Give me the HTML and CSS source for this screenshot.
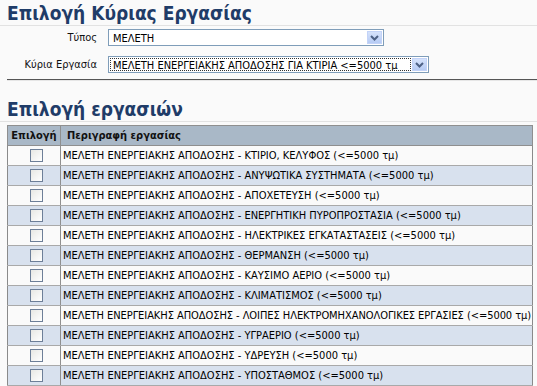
FILE: index.html
```html
<!DOCTYPE html>
<html>
<head>
<meta charset="utf-8">
<link rel="stylesheet" href="styles.css">
</head>
<body>
<h2 class="title">Επιλογή Κύριας Εργασίας</h2>
<div class="form">
  <div class="frow">
    <span class="lbl">Τύπος</span>
    <div class="sel sel-type"><span class="val">ΜΕΛΕΤΗ</span><span class="btn"><svg width="9" height="6" viewBox="0 0 9 6"><path d="M1 1 L4.5 4.5 L8 1" fill="none" stroke="#4d6185" stroke-width="2"/></svg></span></div>
  </div>
  <div class="frow last">
    <span class="lbl">Κύρια Εργασία</span>
    <div class="sel sel-main"><span class="val focus">ΜΕΛΕΤΗ ΕΝΕΡΓΕΙΑΚΗΣ ΑΠΟΔΟΣΗΣ ΓΙΑ ΚΤΙΡΙΑ &lt;=5000 τμ</span><span class="btn"><svg width="9" height="6" viewBox="0 0 9 6"><path d="M1 1 L4.5 4.5 L8 1" fill="none" stroke="#4d6185" stroke-width="2"/></svg></span></div>
  </div>
</div>
<div class="sep"></div>
<h2 class="title title2">Επιλογή εργασιών</h2>
<table class="tasks">
  <colgroup><col class="col1"><col></colgroup>
  <thead>
    <tr><th class="c1">Επιλογή</th><th class="c2">Περιγραφή εργασίας</th></tr>
  </thead>
  <tbody>
    <tr><td class="c1"><span class="cb"></span></td><td>ΜΕΛΕΤΗ ΕΝΕΡΓΕΙΑΚΗΣ ΑΠΟΔΟΣΗΣ - ΚΤΙΡΙΟ, ΚΕΛΥΦΟΣ (&lt;=5000 τμ)</td></tr>
    <tr class="alt"><td class="c1"><span class="cb"></span></td><td>ΜΕΛΕΤΗ ΕΝΕΡΓΕΙΑΚΗΣ ΑΠΟΔΟΣΗΣ - ΑΝΥΨΩΤΙΚΑ ΣΥΣΤΗΜΑΤΑ (&lt;=5000 τμ)</td></tr>
    <tr><td class="c1"><span class="cb"></span></td><td>ΜΕΛΕΤΗ ΕΝΕΡΓΕΙΑΚΗΣ ΑΠΟΔΟΣΗΣ - ΑΠΟΧΕΤΕΥΣΗ (&lt;=5000 τμ)</td></tr>
    <tr class="alt"><td class="c1"><span class="cb"></span></td><td>ΜΕΛΕΤΗ ΕΝΕΡΓΕΙΑΚΗΣ ΑΠΟΔΟΣΗΣ - ΕΝΕΡΓΗΤΙΚΗ ΠΥΡΟΠΡΟΣΤΑΣΙΑ (&lt;=5000 τμ)</td></tr>
    <tr><td class="c1"><span class="cb"></span></td><td>ΜΕΛΕΤΗ ΕΝΕΡΓΕΙΑΚΗΣ ΑΠΟΔΟΣΗΣ - ΗΛΕΚΤΡΙΚΕΣ ΕΓΚΑΤΑΣΤΑΣΕΙΣ (&lt;=5000 τμ)</td></tr>
    <tr class="alt"><td class="c1"><span class="cb"></span></td><td>ΜΕΛΕΤΗ ΕΝΕΡΓΕΙΑΚΗΣ ΑΠΟΔΟΣΗΣ - ΘΕΡΜΑΝΣΗ (&lt;=5000 τμ)</td></tr>
    <tr><td class="c1"><span class="cb"></span></td><td>ΜΕΛΕΤΗ ΕΝΕΡΓΕΙΑΚΗΣ ΑΠΟΔΟΣΗΣ - ΚΑΥΣΙΜΟ ΑΕΡΙΟ (&lt;=5000 τμ)</td></tr>
    <tr class="alt"><td class="c1"><span class="cb"></span></td><td>ΜΕΛΕΤΗ ΕΝΕΡΓΕΙΑΚΗΣ ΑΠΟΔΟΣΗΣ - ΚΛΙΜΑΤΙΣΜΟΣ (&lt;=5000 τμ)</td></tr>
    <tr><td class="c1"><span class="cb"></span></td><td class="long">ΜΕΛΕΤΗ ΕΝΕΡΓΕΙΑΚΗΣ ΑΠΟΔΟΣΗΣ - ΛΟΙΠΕΣ ΗΛΕΚΤΡΟΜΗΧΑΝΟΛΟΓΙΚΕΣ ΕΡΓΑΣΙΕΣ (&lt;=5000 τμ)</td></tr>
    <tr class="alt"><td class="c1"><span class="cb"></span></td><td>ΜΕΛΕΤΗ ΕΝΕΡΓΕΙΑΚΗΣ ΑΠΟΔΟΣΗΣ - ΥΓΡΑΕΡΙΟ (&lt;=5000 τμ)</td></tr>
    <tr><td class="c1"><span class="cb"></span></td><td>ΜΕΛΕΤΗ ΕΝΕΡΓΕΙΑΚΗΣ ΑΠΟΔΟΣΗΣ - ΥΔΡΕΥΣΗ (&lt;=5000 τμ)</td></tr>
    <tr class="alt"><td class="c1"><span class="cb"></span></td><td>ΜΕΛΕΤΗ ΕΝΕΡΓΕΙΑΚΗΣ ΑΠΟΔΟΣΗΣ - ΥΠΟΣΤΑΘΜΟΣ (&lt;=5000 τμ)</td></tr>
  </tbody>
</table>
</body>
</html>
```
FILE: styles.css
```css
html, body {
  margin: 0;
  padding: 0;
  background: #fafafa;
  font-family: "DejaVu Sans Condensed", "DejaVu Sans", sans-serif;
  font-stretch: condensed;
  font-size: 11px;
  color: #000;
  overflow: hidden;
}
.title {
  margin: 0;
  padding: 2px 0 0 7px;
  height: 23px;
  font-size: 19px;
  line-height: 22px;
  font-weight: bold;
  color: #1f3c68;
  border-bottom: 1px solid #e2e2e2;
}
.form {
  padding-top: 3px;
}
.frow {
  display: flex;
  align-items: center;
  height: 17px;
  margin-bottom: 10px;
}
.frow.last {
  margin-bottom: 0;
}
.lbl {
  width: 97px;
  text-align: right;
  font-size: 11px;
  color: #111;
  margin-right: 11px;
}
.sel {
  display: flex;
  height: 17px;
  box-sizing: border-box;
  border: 1px solid #7f9db9;
  background: #fff;
  padding: 1px;
}
.sel-type { width: 276px; }
.sel-main { width: 321px; }
.val {
  flex: 1;
  line-height: 13px;
  padding-left: 2px;
  font-size: 11px;
  white-space: nowrap;
  overflow: hidden;
  box-sizing: border-box;
  border: 1px solid transparent;
}
.val.focus {
  border: 1px dotted #333;
}
.btn {
  width: 15px;
  height: 13px;
  background: linear-gradient(#d5e2fb, #b6cbf4);
  border: 1px solid #c3d3f8;
  box-sizing: border-box;
  display: flex;
  align-items: center;
  justify-content: center;
  margin-left: 1px;
}
.sep {
  margin: 6px 0 0 7px;
  height: 1px;
  background: #555;
  border-bottom: 1px solid #e6e6e6;
}
.title2 {
  margin-top: 15px;
}
.tasks {
  margin: 3px 0 0 7px;
  width: 526px;
  table-layout: fixed;
  border-collapse: collapse;
  border: 1px solid #8a8a8a;
  font-size: 11px;
}
.col1 {
  width: 53px;
}
.tasks th {
  background: #a9b8c7;
  text-align: left;
  font-weight: bold;
  height: 19px;
  padding: 0 3px;
  border: 1px solid #8f8f8f;
  color: #111;
  white-space: nowrap;
}
.tasks th.c2 {
  padding-left: 6px;
}
.tasks td {
  height: 19px;
  padding: 0 0 0 2px;
  border-top: 1px solid #a9a9a9;
  border-bottom: 1px solid #a9a9a9;
  white-space: nowrap;
}
.tasks td.long {
  letter-spacing: -0.06px;
}
.tasks td.c1, .tasks th.c1 {
  text-align: center;
  border-right: 1px solid #8f8f8f;
  padding: 0 1px;
}
.tasks td.c1 {
  padding-left: 6px;
}
.tasks tr.alt td {
  background: #d8e1ee;
}
.cb {
  display: inline-block;
  width: 11px;
  height: 11px;
  border: 1px solid #6d7f98;
  background: linear-gradient(135deg, #e8e8e4, #ffffff);
  vertical-align: middle;
}
```
